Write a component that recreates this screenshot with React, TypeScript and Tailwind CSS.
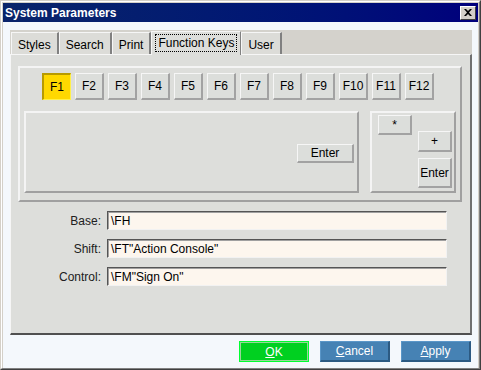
import React from "react";

const raised =
  "bg-[#dcdedb] border-t border-l border-t-[#f6f6f6] border-l-[#f6f6f6] border-b-2 border-r-2 border-b-[#a2a2a2] border-r-[#a2a2a2]";

function KeyBtn({ label, active }: { label: string; active?: boolean }) {
  if (active) {
    return (
      <div className="w-[29px] h-[27px] flex items-center justify-center bg-[#ffd800] border-t-2 border-l-2 border-t-[#b89a00] border-l-[#b89a00] border-b border-r border-b-[#fff04a] border-r-[#fff04a] text-[12px] text-black">
        {label}
      </div>
    );
  }
  return (
    <div className={`w-[29px] h-[27px] flex items-center justify-center ${raised} text-[12px] text-black`}>
      {label}
    </div>
  );
}

function Field({ label, value }: { label: string; value: string }) {
  return (
    <div className="flex items-center h-[19px]">
      <div className="w-[90px] text-right text-[12px] text-[#202020]">{label}</div>
      <div className="ml-[6px] w-[340px] h-[19px] bg-[#fdf6ee] border-t border-l border-t-[#555555] border-l-[#555555] border-b border-r border-b-[#f2f2f2] border-r-[#f2f2f2] shadow-[inset_1px_1px_0_#a0a0a0] flex items-center pl-[3px] text-[12px] text-black whitespace-pre">
        {value}
      </div>
    </div>
  );
}

function Tab({ label, selected }: { label: string; selected?: boolean }) {
  if (selected) {
    return (
      <div className="h-[24px] px-[3px] pt-[2px] bg-[#dddedb] border-l border-t border-l-[#f6f6f6] border-t-[#f6f6f6] border-r border-r-[#808080] flex items-start -mb-[1px] relative z-10">
        <div className="border border-dotted border-black px-[2px] h-[18px] flex items-center text-[12px] text-black">
          {label}
        </div>
      </div>
    );
  }
  return (
    <div className="h-[22px] mt-[2px] px-[6px] bg-[#dcdcd8] border-l border-t border-l-[#f6f6f6] border-t-[#f6f6f6] border-r-2 border-r-[#808080] flex items-center pt-[2px] text-[12px] text-black">
      {label}
    </div>
  );
}

export default function App() {
  const keys = ["F1", "F2", "F3", "F4", "F5", "F6", "F7", "F8", "F9", "F10", "F11", "F12"];
  return (
    <div
      className="w-[481px] h-[370px] bg-[#d4d0c8] border-t border-l border-t-[#d4d0c8] border-l-[#d4d0c8] border-b border-r border-b-[#404040] border-r-[#404040] flex"
      style={{ fontFamily: '"Liberation Sans", Arial, sans-serif' }}
    >
      <div className="flex-1 flex flex-col border-t border-l border-t-white border-l-white border-b border-r border-b-[#808080] border-r-[#808080] px-[1px] pt-[1px]">
        {/* Title bar */}
        <div className="h-[19px] bg-gradient-to-r from-[#0a246a] to-[#00007c] flex items-center pl-[2px] pr-[2px]">
          <div className="text-white font-bold text-[12px] flex-1 leading-none">System Parameters</div>
          <div className="w-[16px] h-[14px] bg-[#d4d0c8] border-t border-l border-t-white border-l-white border-b border-r border-b-[#404040] border-r-[#404040] flex items-center justify-center">
            <svg width="8" height="7" viewBox="0 0 8 7">
              <path d="M0 0 L2 0 L4 2 L6 0 L8 0 L5 3.5 L8 7 L6 7 L4 5 L2 7 L0 7 L3 3.5 Z" fill="#000" />
            </svg>
          </div>
        </div>
        {/* Body */}
        <div className="flex-1 bg-[#f4f8fc] pl-[7px] pr-[6px] pt-[8px] flex flex-col">
          {/* Tab strip */}
          <div className="h-[24px] bg-[#d4d2cc] flex items-end pl-[1px]">
            <Tab label="Styles" />
            <Tab label="Search" />
            <Tab label="Print" />
            <Tab label="Function Keys" selected />
            <Tab label="User" />
          </div>
          {/* Panel */}
          <div className="h-[281px] bg-[#dddedb] border-t border-l border-t-[#f6f6f6] border-l-[#f6f6f6] border-b-2 border-r-2 border-b-[#505050] border-r-[#707070] pl-[7px] pt-[11px]">
            {/* Group box */}
            <div className="w-[444px] h-[136px] border-2 border-t-[#f4f4f4] border-l-[#f4f4f4] border-b-[#a0a0a0] border-r-[#a0a0a0] pt-[5px] pl-[4px] flex flex-col">
              <div className="flex gap-[4px] pl-[18px]">
                {keys.map((k, i) => (
                  <KeyBtn key={k} label={k} active={i === 0} />
                ))}
              </div>
              <div className="flex gap-[11px] mt-[11px]">
                <div className="w-[335px] h-[82px] border-2 border-t-[#f4f4f4] border-l-[#f4f4f4] border-b-[#a0a0a0] border-r-[#a0a0a0] flex items-start justify-end pr-[3px] pt-[31px]">
                  <div className={`w-[57px] h-[19px] ${raised} flex items-center justify-center text-[12px] text-black`}>
                    Enter
                  </div>
                </div>
                <div className="w-[86px] h-[82px] border-2 border-t-[#f4f4f4] border-l-[#f4f4f4] border-b-[#a0a0a0] border-r-[#a0a0a0] flex pt-[2px] pl-[6px]">
                  <div className={`w-[34px] h-[20px] ${raised} flex items-center justify-center text-[12px] text-black`}>
                    *
                  </div>
                  <div className="flex flex-col ml-[6px] mt-[16px] gap-[6px]">
                    <div className={`w-[34px] h-[21px] ${raised} flex items-center justify-center text-[12px] text-black`}>
                      +
                    </div>
                    <div className={`w-[34px] h-[30px] ${raised} flex items-center justify-center text-[12px] text-black`}>
                      Enter
                    </div>
                  </div>
                </div>
              </div>
            </div>
            {/* Fields */}
            <div className="mt-[9px] -ml-[7px] flex flex-col gap-[9px]">
              <Field label="Base:" value="\FH" />
              <Field label="Shift:" value={'\\FT"Action Console"'} />
              <Field label="Control:" value={'\\FM"Sign On"'} />
            </div>
          </div>
          {/* Buttons */}
          <div className="flex justify-end gap-[11px] mt-[6px] pr-[1px]">
            <div className="w-[70px] h-[21px] bg-[#00d020] border border-[#00ff30] flex items-center justify-center">
              <div className="w-full h-full border border-[#9ad49a] flex items-center justify-center text-white text-[12px]">
                <span><u>O</u>K</span>
              </div>
            </div>
            <div className="w-[70px] h-[21px] bg-[#4682b4] border-t border-l border-t-[#5a96c8] border-l-[#5a96c8] border-b-2 border-r-2 border-b-[#2c5a82] border-r-[#2c5a82] flex items-center justify-center text-white text-[12px]">
              <span><u>C</u>ancel</span>
            </div>
            <div className="w-[70px] h-[21px] bg-[#4682b4] border-t border-l border-t-[#5a96c8] border-l-[#5a96c8] border-b-2 border-r-2 border-b-[#2c5a82] border-r-[#2c5a82] flex items-center justify-center text-white text-[12px]">
              <span><u>A</u>pply</span>
            </div>
          </div>
        </div>
      </div>
    </div>
  );
}
